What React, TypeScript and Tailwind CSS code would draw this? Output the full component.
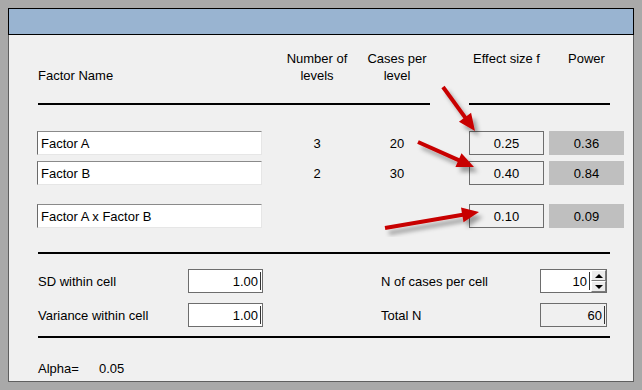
type Pt = [number, number];

const arrows: { from: Pt; tip: Pt }[] = [
  { from: [443, 87], tip: [475, 131] },
  { from: [418, 142], tip: [474, 167] },
  { from: [385, 228], tip: [479, 212] },
];

function Arrow({ from, tip }: { from: Pt; tip: Pt }) {
  const dx = tip[0] - from[0];
  const dy = tip[1] - from[1];
  const len = Math.hypot(dx, dy);
  const ux = dx / len;
  const uy = dy / len;
  const headLen = 17;
  const halfW = 7.5;
  const bx = tip[0] - ux * headLen;
  const by = tip[1] - uy * headLen;
  const px = -uy * halfW;
  const py = ux * halfW;
  const head = `${tip[0]},${tip[1]} ${bx + px},${by + py} ${bx - px},${by - py}`;
  return (
    <g filter="url(#arrowShadow)">
      <line x1={from[0]} y1={from[1]} x2={bx + ux * 2} y2={by + uy * 2} stroke="#c80000" strokeWidth="4" />
      <polygon points={head} fill="#c80000" />
    </g>
  );
}

function Sunken({ children }: { children: React.ReactNode }) {
  return (
    <div className="w-[225px] h-full bg-white border-t border-l border-t-[#8a8a8a] border-l-[#6a6a6a] border-b border-r border-b-[#e6e6e6] border-r-[#e6e6e6] flex items-center pl-[3px]">
      {children}
    </div>
  );
}

function FactorRow({ name, levels, cases, effect, power }: { name: string; levels?: string; cases?: string; effect: string; power: string }) {
  return (
    <div className="flex h-[24px] items-center">
      <Sunken>{name}</Sunken>
      <div className="ml-[25px] w-[60px] text-center">{levels}</div>
      <div className="ml-[20px] w-[60px] text-center">{cases}</div>
      <div className="ml-[42px] w-[75px] h-full border border-[#6d6d6d] flex items-center justify-center">{effect}</div>
      <div className="ml-[5px] w-[75px] h-full bg-[#bfbfbf] flex items-center justify-center">{power}</div>
    </div>
  );
}

function ValueBox({ value, white }: { value: string; white?: boolean }) {
  return (
    <div className={`w-[75px] h-[24px] border border-[#6d6d6d] flex items-center justify-end pr-px ${white ? 'bg-white' : 'bg-[#f0f0f0]'}`}>
      <span>{value}</span>
      <div className="w-px h-[18px] bg-[#333] ml-[2px]" />
    </div>
  );
}

function Spinner({ value }: { value: string }) {
  return (
    <div className="flex w-[67px] h-[24px] border border-[#6d6d6d] bg-white">
      <div className="flex-1 flex items-center justify-end">
        <span>{value}</span>
        <div className="w-px h-[18px] bg-[#333] ml-[2px]" />
      </div>
      <div className="w-[15px] flex flex-col ml-px">
        <div className="flex-1 bg-[#ececec] border-t border-l border-t-white border-l-white border-b border-r border-b-[#7a7a7a] border-r-[#7a7a7a] flex items-center justify-center">
          <div className="w-0 h-0 border-l-[4px] border-r-[4px] border-b-[4px] border-l-transparent border-r-transparent border-b-black" />
        </div>
        <div className="flex-1 bg-[#ececec] border-t border-l border-t-white border-l-white border-b border-r border-b-[#7a7a7a] border-r-[#7a7a7a] flex items-center justify-center">
          <div className="w-0 h-0 border-l-[4px] border-r-[4px] border-t-[4px] border-l-transparent border-r-transparent border-t-black" />
        </div>
      </div>
    </div>
  );
}

export default function App() {
  return (
    <div className="relative w-[642px] h-[390px] bg-[#a9a9a9] p-2 text-[13px] text-black font-['Liberation_Sans',Arial,sans-serif] leading-[17px]">
      <div className="w-[626px] h-[27px] border border-black bg-[#99b4d1]" />
      <div className="w-[626px] h-[347px] border-x border-b border-[#5f5f5f] bg-[#f0f0f0] pl-[28px] pt-[15px]">
        <div className="flex h-[34px] whitespace-nowrap">
          <div className="w-[225px] pl-px flex items-end">Factor Name</div>
          <div className="ml-[25px] w-[60px] flex flex-col items-center">
            <span>Number of</span>
            <span>levels</span>
          </div>
          <div className="ml-[20px] w-[60px] flex flex-col items-center">
            <span>Cases per</span>
            <span>level</span>
          </div>
          <div className="ml-[42px] w-[75px] text-center">Effect size f</div>
          <div className="ml-[5px] w-[75px] text-center">Power</div>
        </div>

        <div className="flex mt-[19px] ml-px">
          <div className="w-[392px] h-[2px] bg-black" />
          <div className="ml-[39px] w-[141px] h-[2px] bg-black" />
        </div>

        <div className="mt-[26px]">
          <FactorRow name="Factor A" levels="3" cases="20" effect="0.25" power="0.36" />
        </div>
        <div className="mt-[6px]">
          <FactorRow name="Factor B" levels="2" cases="30" effect="0.40" power="0.84" />
        </div>
        <div className="mt-[19px]">
          <FactorRow name="Factor A x Factor B" effect="0.10" power="0.09" />
        </div>

        <div className="mt-[24px] ml-px w-[572px] h-[2px] bg-black" />

        <div className="mt-[15px] flex h-[24px] items-center">
          <div className="w-[151px] pl-px">SD within cell</div>
          <ValueBox value="1.00" white />
          <div className="ml-[118px] w-[159px]">N of cases per cell</div>
          <Spinner value="10" />
        </div>
        <div className="mt-[10px] flex h-[24px] items-center">
          <div className="w-[151px] pl-px">Variance within cell</div>
          <ValueBox value="1.00" white />
          <div className="ml-[118px] w-[159px]">Total N</div>
          <div className="w-[67px] h-[24px] border border-[#6d6d6d] flex items-center justify-end pr-px">
            <span>60</span>
            <div className="w-px h-[18px] bg-[#333] ml-[2px]" />
          </div>
        </div>

        <div className="mt-[9px] ml-px w-[572px] h-[2px] bg-black" />

        <div className="mt-[22px] flex pl-px">
          <span className="w-[61px]">Alpha=</span>
          <span>0.05</span>
        </div>
      </div>

      <svg className="absolute inset-0 pointer-events-none" width="642" height="390">
        <defs>
          <filter id="arrowShadow" x="-20%" y="-20%" width="160%" height="160%">
            <feDropShadow dx="4" dy="5" stdDeviation="2" floodColor="#000" floodOpacity="0.35" />
          </filter>
        </defs>
        {arrows.map((a, i) => (
          <Arrow key={i} from={a.from} tip={a.tip} />
        ))}
      </svg>
    </div>
  );
}
